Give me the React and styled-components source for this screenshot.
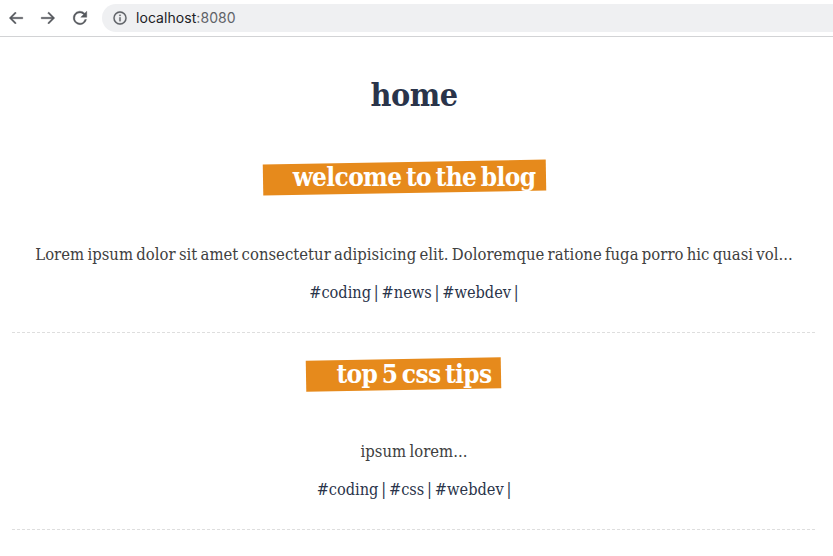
import React from 'react';
import styled, { createGlobalStyle } from 'styled-components';

const GlobalStyle = createGlobalStyle`
  * { box-sizing: border-box; }
  html, body { margin: 0; background: #fff; overflow: hidden; }
  body { font-family: 'DejaVu Serif Condensed', 'DejaVu Serif', serif; font-stretch: condensed; }
`;

const Toolbar = styled.header`
  display: flex;
  align-items: center;
  height: 37px;
  padding-left: 7px;
  border-bottom: 1px solid #d2d3d5;
`;

const ToolButton = styled.button`
  display: grid;
  place-items: center;
  width: 18px;
  height: 18px;
  margin-right: ${({ $gap }) => $gap}px;
  padding: 0;
  border: 0;
  background: none;
  color: #55585d;
`;

const Glyph = styled.svg`
  display: block;
  fill: currentColor;
  stroke: currentColor;
  stroke-width: ${({ $weight }) => $weight};
`;

const AddressBar = styled.div`
  display: flex;
  align-items: center;
  flex: 1;
  height: 28px;
  padding-left: 10px;
  border-radius: 14px 0 0 14px;
  background: #eff0f2;
  color: #5f6368;
`;

const Url = styled.span`
  margin-left: 8px;
  font: 14px/20px Inter, Roboto, sans-serif;
  letter-spacing: 0.06px;
  white-space: nowrap;
`;

const Host = styled.span`
  color: #202124;
`;

const Page = styled.main`
  display: flex;
  flex-direction: column;
  align-items: center;
  width: 804px;
  margin-left: 12px;
  padding-top: 38px;
`;

const Title = styled.h1`
  height: 40px;
  margin: 0 0 43px;
  color: #2a344a;
  font-size: 32px;
  line-height: 40px;
  letter-spacing: -0.5px;
`;

const Post = styled.article`
  display: flex;
  flex-direction: column;
  align-items: center;
  width: 100%;
  height: 197px;
`;

const Heading = styled.h2`
  position: relative;
  height: 38px;
  margin: 0 0 48px;
  color: #fff;
  font-size: 26px;
  line-height: 38px;
  letter-spacing: -0.65px;
  word-spacing: -3px;
  white-space: nowrap;
  z-index: 0;

  &::before {
    content: '';
    position: absolute;
    z-index: -1;
    top: 4px;
    right: -10px;
    left: -30px;
    height: 31px;
    background: #e68a1c;
    transform: rotate(-1deg);
  }
`;

const Excerpt = styled.p`
  height: 22px;
  margin: 0 0 16px;
  color: #404040;
  font-size: 16.5px;
  line-height: 22px;
  letter-spacing: 0.03px;
  word-spacing: -1.5px;
  white-space: nowrap;
`;

const Tags = styled.p`
  height: 22px;
  margin: 0;
  color: #2a344a;
  font-size: 16.2px;
  line-height: 22px;
  word-spacing: -1.8px;
  white-space: nowrap;
`;

const Rule = styled.div`
  width: 100%;
  height: 1px;
  margin-top: 28px;
  background: repeating-linear-gradient(90deg, #dedede 0 3px, transparent 3px 5px);
`;

const Icon = ({ children, size = 18, weight = 0.5 }) => (
  <Glyph width={size} height={size} viewBox="0 0 24 24" $weight={weight}>{children}</Glyph>
);

const posts = [
  { title: 'welcome to the blog', body: 'Lorem ipsum dolor sit amet consectetur adipisicing elit. Doloremque ratione fuga porro hic quasi vol...', tags: '#coding | #news | #webdev |' },
  { title: 'top 5 css tips', body: 'ipsum lorem...', tags: '#coding | #css | #webdev |' },
];

export default function App() {
  return (
    <>
      <GlobalStyle />
      <Toolbar>
        <ToolButton $gap={14} aria-label="Back"><Icon><path d="M21 11H6.8l5.6-5.6L11 4l-8 8 8 8 1.4-1.4L6.8 13H21z" /></Icon></ToolButton>
        <ToolButton $gap={14} aria-label="Forward"><Icon><path d="M3 11h14.2l-5.6-5.6L13 4l8 8-8 8-1.4-1.4 5.6-5.6H3z" /></Icon></ToolButton>
        <ToolButton $gap={13} aria-label="Reload"><Icon size={18}><path d="M18.4 5.6A9 9 0 1 0 20.7 14h-2.3A6.8 6.8 0 1 1 12 5.2c1.9 0 3.5.8 4.8 2L13 11h8V3z" /></Icon></ToolButton>
        <AddressBar>
          <Icon size={16} weight={0.3}><path d="M11 7h2v2h-2zm0 4h2v6h-2zm1-9a10 10 0 1 0 0 20 10 10 0 0 0 0-20zm0 18a8 8 0 1 1 0-16 8 8 0 0 1 0 16z" /></Icon>
          <Url><Host>localhost</Host>:8080</Url>
        </AddressBar>
      </Toolbar>
      <Page>
        <Title>home</Title>
        {posts.map((post) => (
          <Post key={post.title}>
            <Heading>{post.title}</Heading>
            <Excerpt>{post.body}</Excerpt>
            <Tags>{post.tags}</Tags>
            <Rule />
          </Post>
        ))}
      </Page>
    </>
  );
}
